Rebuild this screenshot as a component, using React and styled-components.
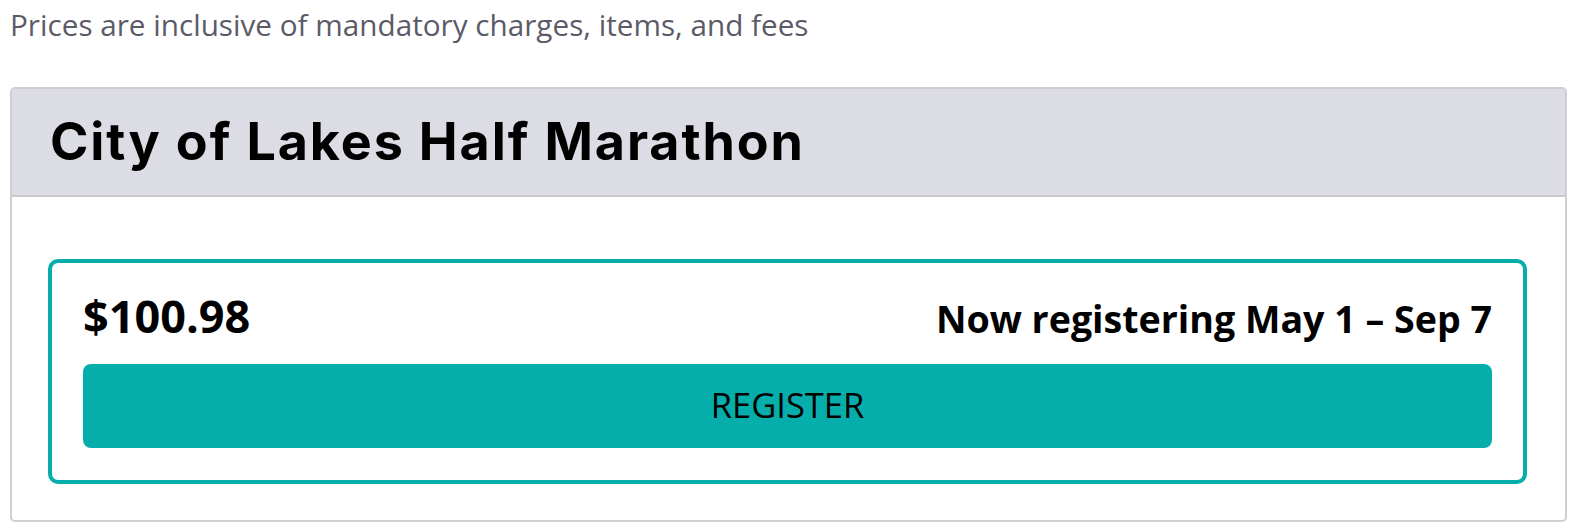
import React from 'react';
import styled, { createGlobalStyle } from 'styled-components';

const GlobalStyle = createGlobalStyle`
  body {
    margin: 0;
    background: #ffffff;
    font-family: "Open Sans", "Liberation Sans", sans-serif;
  }
`;

const Page = styled.div`
  padding: 6px 9px 0 10px;
`;

const Notice = styled.p`
  margin: 0 0 43px 0;
  font-size: 29.7px;
  line-height: 38px;
  color: #5b5b68;
`;

const Card = styled.section`
  border: 2px solid #cfcfd3;
  border-radius: 5px;
  overflow: hidden;
`;

const CardHeader = styled.header`
  background: #dcdce5;
  border-bottom: 2px solid #c9c9ce;
  padding: 24px 38px 24px;
`;

const Title = styled.h1`
  margin: 0;
  font-family: Inter, "Liberation Sans", sans-serif;
  font-weight: 700;
  font-size: 52px;
  letter-spacing: 1.9px;
  line-height: 58px;
  color: #000;
`;

const CardBody = styled.div`
  padding: 62px 38px 36px 36px;
`;

const Ticket = styled.div`
  border: 4px solid #06aeab;
  border-radius: 10px;
  padding: 26px 31px 32px 31px;
`;

const TicketRow = styled.div`
  display: flex;
  justify-content: space-between;
  align-items: baseline;
  margin-bottom: 19px;
`;

const Price = styled.span`
  font-weight: 700;
  font-size: 45px;
  line-height: 53px;
  color: #000;
`;

const Window = styled.span`
  font-weight: 700;
  font-size: 37.6px;
  line-height: 53px;
  color: #000;
`;

const RegisterButton = styled.button`
  display: block;
  width: 100%;
  height: 84px;
  border: none;
  border-radius: 8px;
  background: #06aeab;
  color: #000;
  font-family: "Open Sans", "Liberation Sans", sans-serif;
  font-size: 34.5px;
  padding: 0 0 4px;
  cursor: pointer;
`;

const App = () => {
  return (
    <Page>
      <GlobalStyle />
      <Notice>Prices are inclusive of mandatory charges, items, and fees</Notice>
      <Card>
        <CardHeader>
          <Title>City of Lakes Half Marathon</Title>
        </CardHeader>
        <CardBody>
          <Ticket>
            <TicketRow>
              <Price>$100.98</Price>
              <Window>Now registering May 1 – Sep 7</Window>
            </TicketRow>
            <RegisterButton>REGISTER</RegisterButton>
          </Ticket>
        </CardBody>
      </Card>
    </Page>
  );
};

export default App;
